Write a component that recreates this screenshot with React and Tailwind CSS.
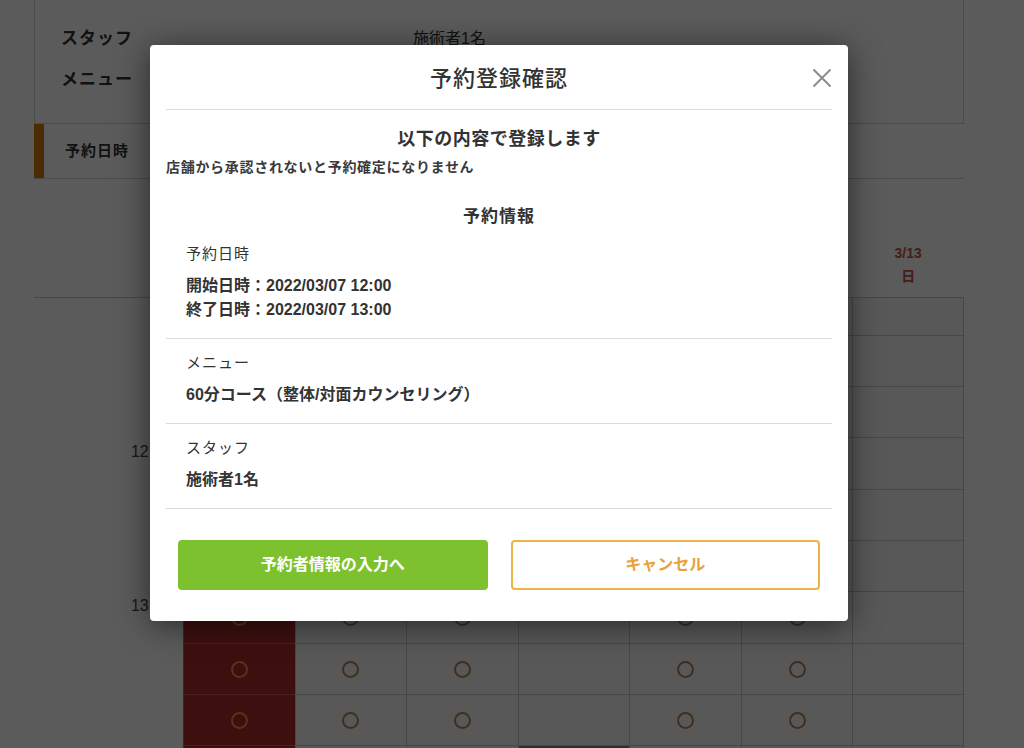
const FONT = "font-['Liberation_Sans','Noto_Sans_CJK_JP',sans-serif]";

const DAYS = [
  { d: '3/7', w: '月' },
  { d: '3/8', w: '火' },
  { d: '3/9', w: '水' },
  { d: '3/10', w: '木' },
  { d: '3/11', w: '金' },
  { d: '3/12', w: '土' },
  { d: '3/13', w: '日', sun: true },
];

// ○ のある列（3/10 は休み、日曜は休み）
const OPEN = [true, true, true, false, true, true, false];

const ROWS = [
  { h: 'h-[38px]', label: '' },
  { h: 'h-[51px]', label: '' },
  { h: 'h-[51px]', label: '' },
  { h: 'h-[52px]', label: '12:00' },
  { h: 'h-[51px]', label: '' },
  { h: 'h-[51px]', label: '' },
  { h: 'h-[52px]', label: '13:00', red: true },
  { h: 'h-[51px]', label: '', red: true },
  { h: 'h-[51px]', label: '', red: true },
  { h: 'h-[51px]', label: '', red: true, dark: true },
];

function Circle({ red }) {
  return <span className={`block w-[17px] h-[17px] rounded-full border-2 ${red ? 'border-[#e39a45]' : 'border-[#b08556]'}`} />;
}

function Background() {
  return (
    <div className="w-[930px] ml-[34px] text-[#333]">
      {/* お客様情報 */}
      <div className="h-[124px] border-x border-b border-[#cfcfcf] pl-[26px] pt-[27px]">
        <div className="grid grid-cols-[352px_1fr] gap-y-[17px] text-[17px] leading-[24px] tracking-[1px]">
          <span className="font-bold">スタッフ</span>
          <span className="text-[16px] tracking-normal">施術者1名</span>
          <span className="font-bold">メニュー</span>
          <span />
        </div>
      </div>
      <div className="h-[55px] border-b border-[#cfcfcf] flex items-center">
        <div className="w-[10px] h-full bg-[#d27a00]" />
        <span className="ml-[21px] text-[15px] font-bold tracking-[1px]">予約日時</span>
      </div>

      {/* 日付ヘッダー（モーダルに隠れない日曜だけ表示される） */}
      <div className="h-[118px] grid grid-cols-[149px_repeat(7,1fr)] items-end pb-[9px]">
        <div />
        {DAYS.map(day => (
          <div key={day.d} className={`text-center text-[14px] font-bold leading-[23px] ${day.sun ? 'text-[#c8553e]' : 'invisible'}`}>
            <div>{day.d}</div>
            <div>{day.w}</div>
          </div>
        ))}
      </div>

      {/* 時間グリッド */}
      <div className="border-t border-[#c8c8c8]">
        {ROWS.map((row, ri) => (
          <div key={ri} className={`grid grid-cols-[149px_repeat(7,1fr)] ${row.h}`}>
            <div className="text-right pr-[12px] pt-[6px] text-[16px] leading-[16px] text-[#444]">{row.label}</div>
            {DAYS.map((day, ci) => {
              const red = row.red && ci === 0;
              const dark = row.dark && ci === 3;
              return (
                <div
                  key={day.d}
                  className={`border-l border-b flex items-center justify-center ${
                    red ? 'bg-[#ad2b2b] border-[#c86060]' : dark ? 'bg-[#858585] border-[#c8c8c8]' : 'bg-[#f7f7f7] border-[#c8c8c8]'
                  } ${ci === 6 ? 'border-r' : ''}`}
                >
                  {ri > 0 && OPEN[ci] && <Circle red={red} />}
                </div>
              );
            })}
          </div>
        ))}
      </div>
    </div>
  );
}

function Section({ label, children, first }) {
  return (
    <div className={`px-5 ${first ? '' : 'pt-[14px]'} pb-4 border-b border-[#dcdcdc]`}>
      <div className="text-[15px] leading-[20px] tracking-[1px]">{label}</div>
      <div className="mt-[10px] text-[16px] leading-[24px] font-bold">{children}</div>
    </div>
  );
}

function ConfirmModal() {
  return (
    <div className="w-[698px] bg-white rounded-[4px] shadow-[0_4px_32px_rgba(0,0,0,0.55)] px-4 pb-[31px] text-[#333]">
      {/* Header */}
      <div className="relative h-[65px] flex items-center justify-center border-b border-[#dcdcdc]">
        <h1 className="text-[22px] font-medium tracking-[1px] pt-[3px]">予約登録確認</h1>
        <button className="absolute right-0 top-[23px] text-[#8c8c8c]">
          <svg width="20" height="20" viewBox="0 0 20 20" fill="none" stroke="currentColor" strokeWidth="2">
            <path d="M1.5 1.5 L18.5 18.5 M18.5 1.5 L1.5 18.5" />
          </svg>
        </button>
      </div>

      {/* Body */}
      <div className="pt-[17px] text-center text-[18px] leading-[24px] font-bold tracking-[0.5px]">以下の内容で登録します</div>
      <div className="mt-[6px] text-[14px] leading-[20px] font-bold tracking-[0.7px] text-[#3a3a3a]">店舗から承認されないと予約確定になりません</div>
      <div className="mt-[28px] text-center text-[17px] leading-[24px] font-bold tracking-[1px]">予約情報</div>

      <div className="mt-[15px]">
        <Section label="予約日時" first>
          <div>開始日時：2022/03/07 12:00</div>
          <div>終了日時：2022/03/07 13:00</div>
        </Section>
        <Section label="メニュー">60分コース（整体/対面カウンセリング）</Section>
        <Section label="スタッフ">施術者1名</Section>
      </div>

      {/* Buttons */}
      <div className="mt-[31px] px-3 grid grid-cols-2 gap-[23px]">
        <button className="h-[50px] rounded-[4px] bg-[#7dc22e] text-white text-[16px] font-bold">予約者情報の入力へ</button>
        <button className="h-[50px] rounded-[4px] bg-white border-2 border-[#ecb445] text-[#e8a23a] text-[16px] font-bold">キャンセル</button>
      </div>
    </div>
  );
}

export default function App() {
  return (
    <div className={`relative w-[1024px] h-[748px] overflow-hidden bg-white ${FONT}`}>
      <Background />
      {/* オーバーレイ */}
      <div className="absolute inset-0 bg-[rgba(0,0,0,0.643)] pl-[150px] pt-[45px]">
        <ConfirmModal />
      </div>
    </div>
  );
}
